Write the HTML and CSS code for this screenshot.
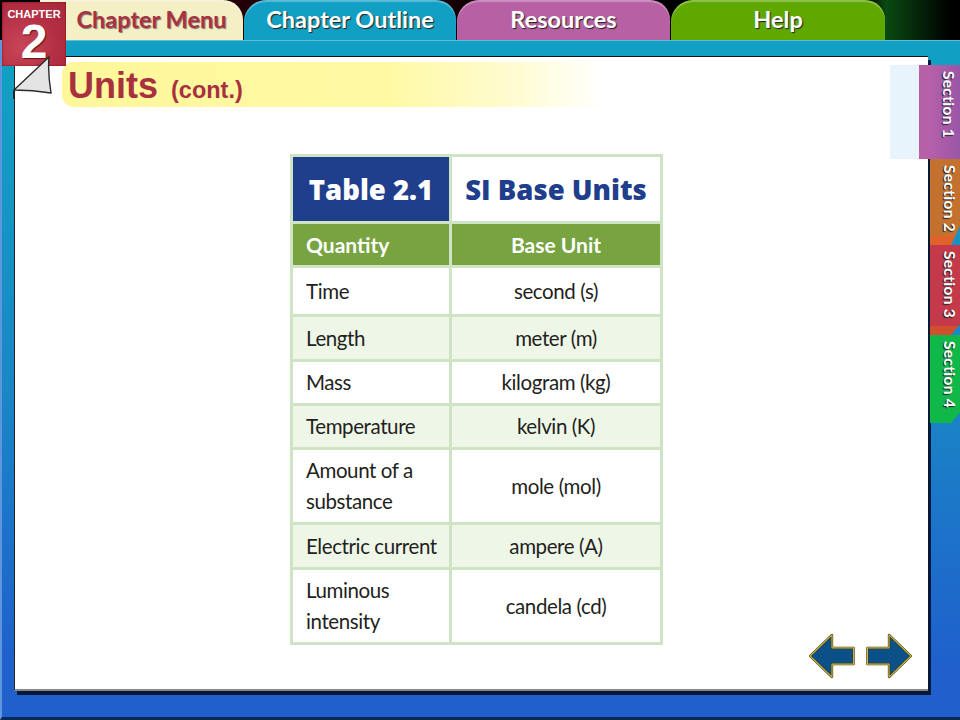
FILE: index.html
```html
<!DOCTYPE html>
<html lang="en">
<head>
<meta charset="utf-8">
<title>Units (cont.)</title>
<link rel="stylesheet" href="styles.css">
</head>
<body>
<div class="stage">
  <nav class="tabbar">
    <div class="tab tab-menu">Chapter Menu</div>
    <div class="tab tab-outline">Chapter Outline</div>
    <div class="tab tab-resources">Resources</div>
    <div class="tab tab-help">Help</div>
  </nav>
  <div class="frame">
    <main class="panel">
      <h1 class="title"><span class="title-main">Units</span> <span class="title-sub">(cont.)</span></h1>
      <table class="units">
        <colgroup><col class="col-a"><col class="col-b"></colgroup>
        <thead>
          <tr class="row-caption"><th class="cap-num">Table 2.1</th><th class="cap-name">SI Base Units</th></tr>
          <tr class="row-head"><th class="left">Quantity</th><th>Base Unit</th></tr>
        </thead>
        <tbody>
          <tr class="h49"><td class="left">Time</td><td>second (s)</td></tr>
          <tr class="h45 tint"><td class="left">Length</td><td>meter (m)</td></tr>
          <tr class="h44"><td class="left">Mass</td><td>kilogram (kg)</td></tr>
          <tr class="h44 tint"><td class="left">Temperature</td><td>kelvin (K)</td></tr>
          <tr class="h75"><td class="left">Amount of a<br>substance</td><td>mole (mol)</td></tr>
          <tr class="h45 tint"><td class="left">Electric current</td><td>ampere (A)</td></tr>
          <tr class="h75"><td class="left">Luminous<br>intensity</td><td>candela (cd)</td></tr>
        </tbody>
      </table>
    </main>
  </div>

  <div class="badge">
    <span class="badge-label">CHAPTER</span>
    <span class="badge-num">2</span>
  </div>

  <svg class="curl" width="42" height="44" viewBox="0 0 42 44" aria-hidden="true">
    <path d="M1 35 L36 2 C35 14 36 26 38 38 C26 36 13 35 1 35 Z" fill="#e4e4e4" stroke="#2a2a2a" stroke-width="1.4"/>
    <path d="M0 36 L0 44 L2 44 L2 36 Z" fill="#222"/>
  </svg>

  <aside class="sections">
    <div class="sec-1-wrap">
      <div class="sec-tint"></div>
      <div class="sec sec-1"><span>Section 1</span></div>
    </div>
    <div class="sec sec-2"><span>Section 2</span></div>
    <div class="sec sec-3"><span>Section 3</span></div>
    <div class="sec sec-4"><span>Section 4</span></div>
  </aside>

  <div class="arrows">
    <svg width="46" height="46" viewBox="0 0 48 47" aria-hidden="true">
      <path d="M1 23.5 L24 1.5 L24 15 L46.5 15 L46.5 32 L24 32 L24 45.5 Z" fill="#0b5086" stroke="#3a3a1a" stroke-width="2.4" stroke-linejoin="round"/>
      <path d="M1 23.5 L24 1.5 L24 15 L46.5 15 L46.5 32 L24 32 L24 45.5 Z" fill="none" stroke="#d0b840" stroke-width="1.2" stroke-linejoin="round"/>
    </svg>
    <svg width="46" height="46" viewBox="0 0 48 47" aria-hidden="true">
      <path d="M47 23.5 L24 1.5 L24 15 L1.5 15 L1.5 32 L24 32 L24 45.5 Z" fill="#0b5086" stroke="#3a3a1a" stroke-width="2.4" stroke-linejoin="round"/>
      <path d="M47 23.5 L24 1.5 L24 15 L1.5 15 L1.5 32 L24 32 L24 45.5 Z" fill="none" stroke="#d0b840" stroke-width="1.2" stroke-linejoin="round"/>
    </svg>
  </div>
</div>
</body>
</html>
```
FILE: styles.css
```css
* { box-sizing: border-box; }
html, body { margin: 0; padding: 0; background: #000; }
.stage {
  position: relative;
  width: 960px;
  height: 720px;
  overflow: hidden;
  display: flex;
  flex-direction: column;
  background: linear-gradient(180deg, #129fc4 0, #129fc4 12%, #1a86c6 55%, #1f60cc 92%);
}

/* top tabs */
.tabbar {
  height: 40px;
  flex: none;
  display: flex;
  gap: 1px;
  padding-left: 40px;
  background: linear-gradient(90deg, #000 0, #2a0008 30%, #1c0006 46%, #000 52%, #000 90%, #0a4a12 92.3%, #000 99%);
}
.tab {
  height: 40px;
  padding-bottom: 2px;
  display: flex;
  align-items: center;
  justify-content: center;
  font-family: Lato, "Liberation Sans", sans-serif;
  font-weight: 700;
  font-size: 23.5px;
  color: #fff;
  text-shadow: 1px 1px 1px #222;
  border-radius: 22px 20px 0 0;
  box-shadow: inset 0 2px 1px rgba(255,255,255,.3);
}
.tab-menu {
  width: 203px;
  padding-left: 20px;
  background: #f4efc4;
  color: #a8323f;
  text-shadow: 1px 1px 1px #777;
  border-top-left-radius: 0;
}
.tab-outline { width: 212px; background: #129fc4; }
.tab-resources { width: 213px; background: #b860a4; }
.tab-help { width: 214px; background: #5fa800; }

/* frame and white panel */
.frame {
  flex: 1;
  padding: 15px 32px 26px 12px;
  border-top: 1px solid #5cc0d8;
  border-left: 2px solid #5f95dc;
  border-bottom: 3px solid #0a2a55;
  display: flex;
}
.panel {
  flex: 1;
  background: #fff;
  border-top: 1px solid #111;
  border-left: 1px solid #222;
  border-bottom: 2px solid #888;
  box-shadow: 3px 4px 0 #04183a;
  display: flex;
  flex-direction: column;
  align-items: flex-start;
}

.title {
  margin: 5px 0 0 47px;
  width: 541px;
  height: 45px;
  padding: 1px 0 0 6px;
  display: flex;
  align-items: baseline;
  gap: 13px;
  background: linear-gradient(90deg, #fff79a 0, #fff9a4 60%, #fffcd4 85%, #fff 100%);
  border-radius: 12px 0 0 12px;
  font-family: "Liberation Sans", Arial, sans-serif;
  font-weight: 700;
  color: #a8303f;
  line-height: 45px;
}
.title-main { font-size: 36px; }
.title-sub { font-size: 23.5px; }

/* table */
.units {
  margin: 47px 0 0 275px;
  width: 373px;
  table-layout: fixed;
  border-collapse: collapse;
  font-family: Lato, "Liberation Sans", sans-serif;
  font-size: 20.5px;
  letter-spacing: -.4px;
  line-height: 31px;
  color: #231f20;
}
.col-a { width: 159px; }
.units th, .units td {
  border: 3px solid #cfe4c4;
  padding: 0;
  text-align: center;
  font-weight: 400;
  white-space: nowrap;
}
.units .left { text-align: left; padding-left: 13px; }
.row-caption { height: 67px; }
.units .row-caption th {
  font-family: "Open Sans", "Liberation Sans", sans-serif;
  font-weight: 800;
  font-size: 27.5px;
  letter-spacing: 0;
}
.units .cap-num { background: #1f3e8c; color: #fff; }
.units .cap-name { background: #fff; color: #1f3e8c; }
.row-head { height: 44px; }
.units .row-head th { background: #77a340; color: #fff; font-weight: 700; font-size: 21px; letter-spacing: 0; }
.h44 { height: 44px; }
.h45 { height: 45px; }
.h49 { height: 49px; }
.h75 { height: 75px; }
.tint td { background: #eef6e8; }

/* chapter badge */
.badge {
  position: absolute;
  left: 2px;
  top: 2px;
  width: 64px;
  height: 64px;
  background: radial-gradient(circle at 30% 70%, #c84658 0, #b22d42 60%, #a62a3d 100%);
  color: #fff;
  display: flex;
  flex-direction: column;
  align-items: center;
  box-shadow: inset 0 0 2px #700;
  font-family: "Liberation Sans", Arial, sans-serif;
}
.badge-label { font-size: 11px; font-weight: 700; line-height: 11px; margin-top: 7px; }
.badge-num {
  margin-top: 5px;
  font-family: "Liberation Sans", Arial, sans-serif;
  font-weight: 700;
  font-size: 48px;
  line-height: 34px;
  text-shadow: 1px 1px 1px #611;
}

.curl { position: absolute; left: 13px; top: 55px; }

/* section tabs */
.sections {
  position: absolute;
  right: 0;
  top: 65px;
  display: flex;
  flex-direction: column;
  align-items: flex-end;
}
.sec-1-wrap { display: flex; }
.sec-tint { width: 29px; height: 94px; background: #e8f4fb; }
.sec {
  width: 30px;
  height: 88px;
  display: flex;
  justify-content: center;
  padding-top: 6px;
  padding-left: 9px;
  font-family: Lato, "Liberation Sans", sans-serif;
  font-weight: 700;
  font-size: 15.5px;
  letter-spacing: .3px;
  color: #fff;
  text-shadow: 1px 1px 1px #222;
}
.sec span { writing-mode: vertical-rl; }
.sec-1 {
  width: 41px;
  height: 94px;
  padding-left: 19px;
  background: linear-gradient(90deg, #b660a8 0, #b660a8 26%, #9a56a8 100%);
}
.sec-2 {
  height: 86px;
  background: linear-gradient(180deg, #c4702e 0, #c4702e 90%, #e0622a 90%);
  clip-path: polygon(0 0, 100% 0, 100% 78%, 70% 100%, 0 100%);
}
.sec-3 {
  height: 90px;
  background: linear-gradient(180deg, #c43a4a 0, #c43a4a 90%, #d0502e 90%);
  clip-path: polygon(0 0, 100% 0, 100% 88%, 70% 100%, 0 100%);
}
.sec-4 { height: 88px; background: #10b84a; clip-path: polygon(0 0, 100% 0, 100% 88%, 70% 100%, 0 100%); }

/* navigation arrows */
.arrows {
  position: absolute;
  left: 809px;
  top: 633px;
  display: flex;
  gap: 11px;
}
```
